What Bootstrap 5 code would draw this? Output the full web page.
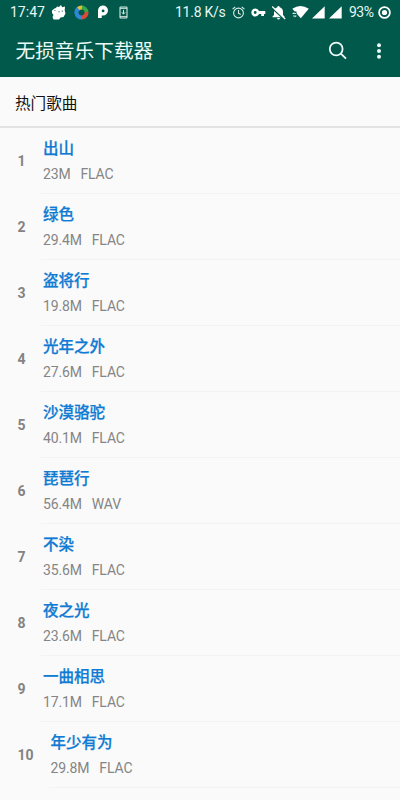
<!DOCTYPE html>
<html lang="zh-CN">
<head>
<meta charset="utf-8">
<meta name="viewport" content="width=device-width, initial-scale=1">
<title>无损音乐下载器</title>
<link href="https://cdn.jsdelivr.net/npm/bootstrap@5.3.0/dist/css/bootstrap.min.css" rel="stylesheet">
<style>
body{font-family:Roboto,"Noto Sans CJK SC",sans-serif;background:#fafafa;height:800px;overflow:hidden}
svg{display:block;flex:none}
.app-top{background:#01594b;color:#e6f7f3;height:77px}
.status{height:24px;font-size:14px;line-height:24px;padding-left:10px;padding-right:9px}
.status span{white-space:nowrap}
.app-bar{height:54px;padding:0 18px 0 15.5px}
.app-title{font-size:19.7px;line-height:28px;font-weight:400;color:#eafaf6;padding-top:2px}
.section-head{height:51px;border-bottom:2px solid #e3e3e3;padding:4px 14px 0 15px;font-size:15.6px;line-height:24px;color:#111}
.song{height:66px}
.song-no{padding-left:17.5px;min-width:41px;padding-right:15px;padding-top:1px;font-size:14px;font-weight:700;color:#838383}
.song-info{border-bottom:1px solid #f2f2f2;padding:9px 0 0 2px}
.song-name{font-size:15.5px;line-height:24px;font-weight:500;color:#0f7bd3;-webkit-text-stroke:.25px #0f7bd3}
.song-meta{font-size:14px;letter-spacing:-.15px;line-height:20px;color:#858585;margin-top:3px;gap:10px}
</style>
<script src="https://cdn.jsdelivr.net/npm/bootstrap@5.3.0/dist/js/bootstrap.bundle.min.js"></script>
</head>
<body>
<header class="app-top">
  <div class="status d-flex align-items-center justify-content-between">
    <div class="d-flex align-items-center">
      <span style="width:41px">17:47</span>
      <svg width="15" height="16" viewBox="0 0 15 16"><path fill="#fff" d="M1 6.500 3.500 4.500 5 4l1-1.500L8 3l2-2 1.200 2.200L14 2.500l-.3 4 .8 3-2 3.500-3 .5L8 15.500H2.500L1.500 13l1-2L1 9z"/><path d="M8 7v1.300M11.300 6.500v1.300M3.500 6l.8 1" fill="none" stroke="#01594b" stroke-width=".8"/></svg>
      <svg class="ms-2" width="15" height="15" viewBox="0 0 15 15"><g fill="none" stroke-width="4"><path d="M2.500 8.500A5 5 0 0 1 5 3.300" stroke="#2f87d6"/><path d="M4.300 3.700A5 5 0 0 1 8.500 2.600" stroke="#e2bd38"/><path d="M8 2.600A5 5 0 0 1 12.500 7.500" stroke="#3ba648"/><path d="M12.500 7A5 5 0 0 1 7.500 12.500" stroke="#dc4a36"/><path d="M8 12.500A5 5 0 0 1 2.500 8" stroke="#2f87d6"/></g></svg>
      <svg class="ms-2" width="12" height="14" viewBox="0 0 12 14"><path fill="#fff" fill-rule="evenodd" d="M1 12.500V6A5 5 0 1 1 6 10.500H4.700V13H1zM4.700 5.900A1.400 1.400 0 1 0 7.500 5.900 1.400 1.400 0 1 0 4.700 5.900z"/></svg>
      <svg width="9" height="13" viewBox="0 0 9 13" style="margin-left:10px"><rect x="1" y="1" width="7" height="11" rx=".8" fill="none" stroke="#d5eae5" stroke-width="1.100"/><path d="M1 2.300h7M1 10.700h7M4.500 3.800v4M2.900 6.300l1.600 1.900 1.600-1.900" fill="none" stroke="#d5eae5"/></svg>
    </div>
    <div class="d-flex align-items-center">
      <span style="width:57px;letter-spacing:-.25px">11.8 K/s</span>
      <svg width="13" height="13" viewBox="0 0 13 13"><g fill="none" stroke="#d7ece7" stroke-width="1.100"><circle cx="6.500" cy="7" r="4.900"/><path d="M6.500 4v3.200l2.200 1.300M.6 3.200 3.200 1M12.400 3.200 9.800 1"/></g></svg>
      <svg width="15" height="9" viewBox="0 0 15 9" style="margin-left:6px"><path fill="#fff" fill-rule="evenodd" d="M8 3a4 4 0 1 0 0 3h2.200v2H13V6h1.300V3zM4.200 3.100a1.400 1.400 0 1 1 0 2.800 1.400 1.400 0 0 1 0-2.800z"/></svg>
      <svg width="15" height="15" viewBox="0 0 15 15" style="margin-left:5px"><path fill="#fff" d="M7.500 1q1.100 0 1.200 1.300Q12 3.300 12 7v3l1.500 1.500v.8H1.500v-.8L3 10V7q0-3.700 3.300-4.700Q6.400 1 7.500 1zM6 13h3q-.3 1.500-1.500 1.500T6 13z"/><path d="m.5 2.800 13 12" stroke="#01594b" stroke-width="1.300"/><path d="m1.200 1.500 13 12.500" stroke="#fff" stroke-width="1.200"/></svg>
      <svg width="17" height="14" viewBox="0 0 17 14" style="margin-left:6px"><path fill="#fff" d="M.3 3.700q8.200-5.400 16.500 0L8.800 13.300z"/><path d="M0 6.500h4.500v7H0z" fill="#01594b"/><path d="M.5 8.500h3.500M1 8.500l1.300-1M4.500 11H1m3 0-1.300 1" stroke="#fff" stroke-width=".8"/></svg>
      <svg width="13" height="13" viewBox="0 0 13 13" style="margin-left:3px"><path fill="#fff" d="M0 12.500 12.700.3v12.200z"/></svg>
      <svg width="13" height="13" viewBox="0 0 13 13" style="margin-left:4px"><path fill="#fff" d="M0 12.500 12.700.3v12.200z"/></svg>
      <span style="margin-left:7px;width:29px;letter-spacing:-.5px">93%</span>
      <svg width="13" height="13" viewBox="0 0 13 13"><circle cx="6.500" cy="6.500" r="5.400" fill="none" stroke="#fff" stroke-width="1.800"/><circle cx="6.500" cy="6.500" r="2.600" fill="#fff"/></svg>
    </div>
  </div>
  <div class="app-bar d-flex align-items-center">
    <h1 class="app-title mb-0 me-auto">无损音乐下载器</h1>
    <svg width="20" height="20" viewBox="0 0 20 20"><g fill="none" stroke="#eefaf7" stroke-width="1.800"><circle cx="8.200" cy="8" r="6.400"/><path d="m12.600 12.400 5.400 5.300"/></g></svg>
    <svg width="6" height="18" viewBox="0 0 6 18" style="margin-left:28px"><g fill="#eefaf7"><circle cx="3" cy="3.300" r="2"/><circle cx="3" cy="9" r="2"/><circle cx="3" cy="14.700" r="2"/></g></svg>
  </div>
</header>
<main>
  <h2 class="section-head d-flex align-items-center mb-0 fw-normal">热门歌曲</h2>
  <div>
    <div class="song d-flex"><div class="song-no d-flex align-items-center">1</div><div class="song-info flex-grow-1"><div class="song-name">出山</div><div class="song-meta d-flex"><span>23M</span><span>FLAC</span></div></div></div>
    <div class="song d-flex"><div class="song-no d-flex align-items-center">2</div><div class="song-info flex-grow-1"><div class="song-name">绿色</div><div class="song-meta d-flex"><span>29.4M</span><span>FLAC</span></div></div></div>
    <div class="song d-flex"><div class="song-no d-flex align-items-center">3</div><div class="song-info flex-grow-1"><div class="song-name">盗将行</div><div class="song-meta d-flex"><span>19.8M</span><span>FLAC</span></div></div></div>
    <div class="song d-flex"><div class="song-no d-flex align-items-center">4</div><div class="song-info flex-grow-1"><div class="song-name">光年之外</div><div class="song-meta d-flex"><span>27.6M</span><span>FLAC</span></div></div></div>
    <div class="song d-flex"><div class="song-no d-flex align-items-center">5</div><div class="song-info flex-grow-1"><div class="song-name">沙漠骆驼</div><div class="song-meta d-flex"><span>40.1M</span><span>FLAC</span></div></div></div>
    <div class="song d-flex"><div class="song-no d-flex align-items-center">6</div><div class="song-info flex-grow-1"><div class="song-name">琵琶行</div><div class="song-meta d-flex"><span>56.4M</span><span>WAV</span></div></div></div>
    <div class="song d-flex"><div class="song-no d-flex align-items-center">7</div><div class="song-info flex-grow-1"><div class="song-name">不染</div><div class="song-meta d-flex"><span>35.6M</span><span>FLAC</span></div></div></div>
    <div class="song d-flex"><div class="song-no d-flex align-items-center">8</div><div class="song-info flex-grow-1"><div class="song-name">夜之光</div><div class="song-meta d-flex"><span>23.6M</span><span>FLAC</span></div></div></div>
    <div class="song d-flex"><div class="song-no d-flex align-items-center">9</div><div class="song-info flex-grow-1"><div class="song-name">一曲相思</div><div class="song-meta d-flex"><span>17.1M</span><span>FLAC</span></div></div></div>
    <div class="song d-flex"><div class="song-no d-flex align-items-center">10</div><div class="song-info flex-grow-1"><div class="song-name">年少有为</div><div class="song-meta d-flex"><span>29.8M</span><span>FLAC</span></div></div></div>
  </div>
</main>
</body>
</html>
